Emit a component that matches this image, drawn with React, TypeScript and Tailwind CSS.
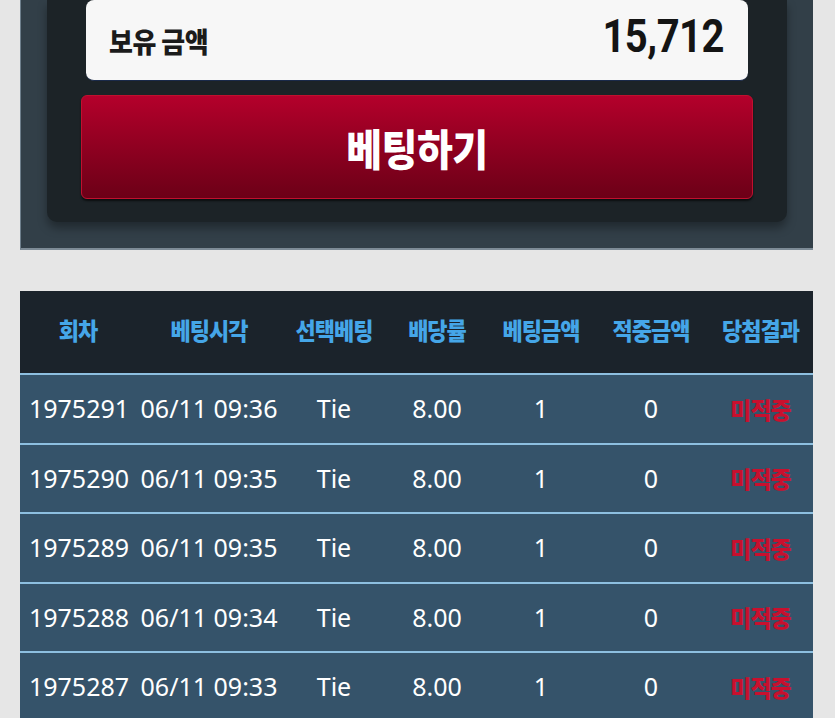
const rows = [
  { no: '1975291', time: '06/11 09:36' },
  { no: '1975290', time: '06/11 09:35' },
  { no: '1975289', time: '06/11 09:35' },
  { no: '1975288', time: '06/11 09:34' },
  { no: '1975287', time: '06/11 09:33' },
];

const headers = ['회차', '베팅시각', '선택베팅', '배당률', '베팅금액', '적중금액', '당첨결과'];
const widths = ['w-[116px]', 'w-[146px]', 'w-[104px]', 'w-[102px]', 'w-[106px]', 'w-[114px]', 'w-[105px]'];

const kr = { fontFamily: '"Noto Sans CJK KR", sans-serif' };

export default function App() {
  return (
    <div className="min-h-screen bg-[#e6e6e6] pb-10" style={{ fontFamily: '"Noto Sans", "Noto Sans CJK KR", sans-serif' }}>
      {/* Bet panel */}
      <div className="ml-[20px] w-[793px] bg-[#323f48] border-l border-[#6e7f8c] border-b-2 border-b-[#7d8b96] px-[26px] pb-[26px]">
        <div className="bg-[#1c2327] rounded-b-[10px] px-[34px] pb-[23px] shadow-[0_6px_10px_rgba(0,0,0,0.35)]">
          <div className="mx-[5px] h-[81px] bg-[#f7f7f7] rounded-lg border-b border-[#1a2a4a] flex items-center justify-between pl-[23px] pr-[24px]">
            <span className="text-[26px] font-black text-[#1b1b1b] tracking-[-0.5px] scale-y-110" style={kr}>보유 금액</span>
            <span className="text-[40px] font-bold text-[#141414] -mt-[6px] scale-y-[1.15] tracking-[-0.5px]" style={{ fontFamily: 'Roboto, sans-serif' }}>15,712</span>
          </div>
          <button className="mt-[14px] w-full h-[104px] rounded-md bg-gradient-to-b from-[#b4002b] to-[#6c0017] border border-[#c0102e] shadow-[0_2px_2px_rgba(0,0,0,0.6)] flex items-center justify-center">
            <span className="text-[39px] font-black text-white tracking-[-0.5px] scale-y-110" style={kr}>베팅하기</span>
          </button>
        </div>
      </div>

      {/* History table */}
      <div className="ml-[20px] mt-[41px] w-[793px]">
        <div className="flex h-[84px] items-center pb-[6px] bg-[#1b232b] border-b-2 border-[#8dbfe0]">
          {headers.map((h, i) => (
            <div key={h} className={`${widths[i]} text-center text-[22px] font-black text-[#45a6e8] tracking-[-1px] scale-y-110`} style={kr}>
              {h}
            </div>
          ))}
        </div>
        {rows.map((r) => (
          <div key={r.no} className="flex h-[69.5px] items-center bg-[#35536a] border-b-2 border-[#8dbfe0] text-white text-[25px]">
            <div className={`${widths[0]} text-center pl-[2px]`}>{r.no}</div>
            <div className={`${widths[1]} text-center`}>{r.time}</div>
            <div className={`${widths[2]} text-center`}>Tie</div>
            <div className={`${widths[3]} text-center`}>8.00</div>
            <div className={`${widths[4]} text-center`}>1</div>
            <div className={`${widths[5]} text-center`}>0</div>
            <div className={`${widths[6]} text-center text-[23px] font-black text-[#c8102e] tracking-[-1px]`} style={kr}>
              미적중
            </div>
          </div>
        ))}
      </div>
    </div>
  );
}
